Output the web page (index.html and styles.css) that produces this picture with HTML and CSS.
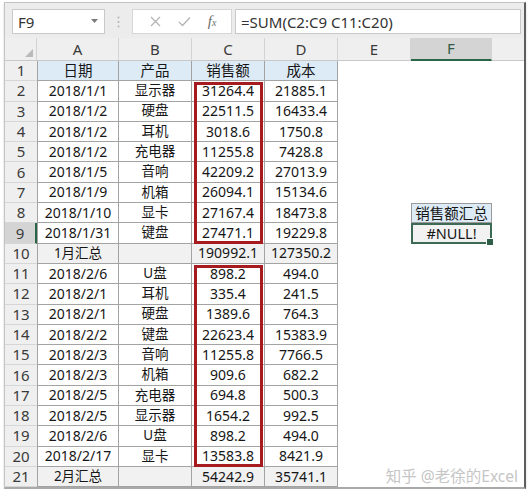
FILE: index.html
```html
<!DOCTYPE html>
<html lang="zh-CN">
<head>
<meta charset="utf-8">
<title>Sheet</title>
<link rel="stylesheet" href="styles.css">
</head>
<body>
<div class="win">
  <div class="fbar">
    <div class="namebox"><span>F9</span><svg class="dd" width="7" height="4" viewBox="0 0 7 4"><path d="M0 0H7L3.5 4Z" fill="#7b7b7b"/></svg></div>
    <div class="sep"><svg width="3" height="12" viewBox="0 0 3 12"><circle cx="1.5" cy="1.5" r="1" fill="#b3b3b3"/><circle cx="1.5" cy="6" r="1" fill="#b3b3b3"/><circle cx="1.5" cy="10.5" r="1" fill="#b3b3b3"/></svg></div>
    <div class="btns">
      <svg width="11" height="11" viewBox="0 0 11 11"><path d="M1 1L10 10M10 1L1 10" stroke="#b4b4b4" stroke-width="1.3" fill="none"/></svg>
      <svg width="13" height="11" viewBox="0 0 13 11"><path d="M1 6L4.5 9.5L12 1.5" stroke="#b4b4b4" stroke-width="1.3" fill="none"/></svg>
      <span class="fx">f<span class="fxx">x</span></span>
    </div>
    <div class="formula">=SUM(C2:C9 C11:C20)</div>
  </div>
  <div class="sheet">
    <div class="row g1">
      <div class="ch corner"><svg width="8" height="8" viewBox="0 0 8 8"><path d="M8 0V8H0Z" fill="#bababa"/></svg></div>
      <div class="ch">A</div><div class="ch">B</div><div class="ch">C</div><div class="ch">D</div><div class="ch">E</div><div class="ch selc">F</div><div class="ch fill"></div>
    </div>
    <div class="row g2"><div class="rh">1</div><div class="d hd">日期</div><div class="d hd">产品</div><div class="d hd">销售额</div><div class="d hd">成本</div></div>
    <div class="row g3"><div class="rh">2</div><div class="d">2018/1/1</div><div class="d cn">显示器</div><div class="d">31264.4</div><div class="d">21885.1</div></div>
    <div class="row g4"><div class="rh">3</div><div class="d">2018/1/2</div><div class="d cn">硬盘</div><div class="d">22511.5</div><div class="d">16433.4</div></div>
    <div class="row g5"><div class="rh">4</div><div class="d">2018/1/2</div><div class="d cn">耳机</div><div class="d">3018.6</div><div class="d">1750.8</div></div>
    <div class="row g6"><div class="rh">5</div><div class="d">2018/1/2</div><div class="d cn">充电器</div><div class="d">11255.8</div><div class="d">7428.8</div></div>
    <div class="row g7"><div class="rh">6</div><div class="d">2018/1/5</div><div class="d cn">音响</div><div class="d">42209.2</div><div class="d">27013.9</div></div>
    <div class="row g8"><div class="rh">7</div><div class="d">2018/1/9</div><div class="d cn">机箱</div><div class="d">26094.1</div><div class="d">15134.6</div></div>
    <div class="row g9"><div class="rh">8</div><div class="d">2018/1/10</div><div class="d cn">显卡</div><div class="d">27167.4</div><div class="d">18473.8</div></div>
    <div class="row g10"><div class="rh selr">9</div><div class="d">2018/1/31</div><div class="d cn">键盘</div><div class="d">27471.1</div><div class="d">19229.8</div></div>
    <div class="row g11"><div class="rh">10</div><div class="d sm cn">1月汇总</div><div class="d sm"></div><div class="d sm">190992.1</div><div class="d sm">127350.2</div></div>
    <div class="row g12"><div class="rh">11</div><div class="d">2018/2/6</div><div class="d cn">U盘</div><div class="d">898.2</div><div class="d">494.0</div></div>
    <div class="row g13"><div class="rh">12</div><div class="d">2018/2/1</div><div class="d cn">耳机</div><div class="d">335.4</div><div class="d">241.5</div></div>
    <div class="row g14"><div class="rh">13</div><div class="d">2018/2/1</div><div class="d cn">硬盘</div><div class="d">1389.6</div><div class="d">764.3</div></div>
    <div class="row g15"><div class="rh">14</div><div class="d">2018/2/2</div><div class="d cn">键盘</div><div class="d">22623.4</div><div class="d">15383.9</div></div>
    <div class="row g16"><div class="rh">15</div><div class="d">2018/2/3</div><div class="d cn">音响</div><div class="d">11255.8</div><div class="d">7766.5</div></div>
    <div class="row g17"><div class="rh">16</div><div class="d">2018/2/3</div><div class="d cn">机箱</div><div class="d">909.6</div><div class="d">682.2</div></div>
    <div class="row g18"><div class="rh">17</div><div class="d">2018/2/5</div><div class="d cn">充电器</div><div class="d">694.8</div><div class="d">500.3</div></div>
    <div class="row g19"><div class="rh">18</div><div class="d">2018/2/5</div><div class="d cn">显示器</div><div class="d">1654.2</div><div class="d">992.5</div></div>
    <div class="row g20"><div class="rh">19</div><div class="d">2018/2/6</div><div class="d cn">U盘</div><div class="d">898.2</div><div class="d">494.0</div></div>
    <div class="row g21"><div class="rh">20</div><div class="d">2018/2/17</div><div class="d cn">显卡</div><div class="d">13583.8</div><div class="d">8421.9</div></div>
    <div class="row g22"><div class="rh">21</div><div class="d sm cn">2月汇总</div><div class="d sm"></div><div class="d sm">54242.9</div><div class="d sm">35741.1</div></div>

    <div class="f8">销售额汇总</div>
    <div class="f9">#NULL!</div>
    <div class="rb rb1"></div>
    <div class="rb rb2"></div>
    <div class="wm">知乎 @老徐的Excel</div>
  </div>
</div>
</body>
</html>
```
FILE: styles.css
```css
* { box-sizing: border-box; }
body {
  margin: 0;
  background: #fff;
  font-family: "Noto Sans", "Noto Sans CJK SC", sans-serif;
  color: #161616;
}
.win {
  margin: 2px 0 0 4px;
  width: 522px;
  border-top: 1px solid #c4c4c4;
  border-left: 1px solid #c4c4c4;
  border-right: 2px solid #5e5e5e;
  border-bottom: 2px solid #a9a9a9;
  background: #ececec;
  box-shadow: 0 1px 2px rgba(0,0,0,0.18);
}
.fbar {
  display: flex;
  height: 35px;
  padding: 6px 3px 4px 7px;
}
.namebox {
  width: 93px;
  background: #fff;
  border: 1px solid #c9c9c9;
  display: flex;
  align-items: center;
  justify-content: space-between;
  padding: 0 6px 0 5px;
  font-size: 15px;
  color: #333;
}
.dd { margin-top: -2px; }
.sep {
  width: 27px;
  display: flex;
  align-items: center;
  justify-content: center;
}
.btns {
  width: 100px;
  background: #fff;
  border: 1px solid #d6d6d6;
  display: flex;
  align-items: center;
  justify-content: space-around;
  padding: 0 6px 0 8px;
}
.fx {
  font-family: "Liberation Serif", serif;
  font-style: italic;
  font-size: 15px;
  color: #6d6d6d;
}
.fxx { font-size: 10px; }
.formula {
  flex: 1;
  margin-left: 3px;
  background: #fff;
  border: 1px solid #c9c9c9;
  font-size: 15px;
  padding-left: 5px;
  display: flex;
  align-items: center;
  color: #333;
}
.sheet {
  display: grid;
  grid-template-columns: 32px 82px 73px 73px 73px 73px 81px 1fr;
  grid-template-rows: 23px repeat(21, 20.3px);
  background: #fff;
}
.row { display: contents; }
.row > * {
  display: flex;
  align-items: center;
  justify-content: center;
  white-space: nowrap;
  font-size: 14px;
  line-height: 1;
}
.row > :nth-child(1) { grid-column: 1; }
.row > :nth-child(2) { grid-column: 2; }
.row > :nth-child(3) { grid-column: 3; }
.row > :nth-child(4) { grid-column: 4; }
.row > :nth-child(5) { grid-column: 5; }
.row > :nth-child(6) { grid-column: 6; }
.row > :nth-child(7) { grid-column: 7; }
.row > :nth-child(8) { grid-column: 8; }
.g1 > * { grid-row: 1; }
.g2 > * { grid-row: 2; }
.g3 > * { grid-row: 3; }
.g4 > * { grid-row: 4; }
.g5 > * { grid-row: 5; }
.g6 > * { grid-row: 6; }
.g7 > * { grid-row: 7; }
.g8 > * { grid-row: 8; }
.g9 > * { grid-row: 9; }
.g10 > * { grid-row: 10; }
.g11 > * { grid-row: 11; }
.g12 > * { grid-row: 12; }
.g13 > * { grid-row: 13; }
.g14 > * { grid-row: 14; }
.g15 > * { grid-row: 15; }
.g16 > * { grid-row: 16; }
.g17 > * { grid-row: 17; }
.g18 > * { grid-row: 18; }
.g19 > * { grid-row: 19; }
.g20 > * { grid-row: 20; }
.g21 > * { grid-row: 21; }
.g22 > * { grid-row: 22; }

.row > .ch {
  background: #efefef;
  border-right: 1px solid #d3d3d3;
  border-bottom: 1px solid #c8c8c8;
  color: #3a3a3a;
  font-size: 15px;
}
.row > .corner {
  justify-content: flex-end;
  align-items: flex-end;
  padding: 0 3px 3px 0;
}
.row > .selc {
  background: #d4d4d4;
  border-bottom: 2px solid #2b6547;
  color: #2f5a45;
}
.row > .fill { border-right: none; }
.row > .rh {
  background: #efefef;
  border-bottom: 1px solid #d6d6d6;
  color: #3a3a3a;
  font-size: 15px;
}
.row > .selr {
  background: #d4d4d4;
  border-right: 2px solid #2b6547;
}
.d {
  border-right: 1px solid #a3a3a3;
  border-bottom: 1px solid #a3a3a3;
}
.row > .d:nth-child(2) { border-left: 1px solid #a3a3a3; }
.row > .hd { background: #ddebf7; font-size: 14.5px; }
.row > .cn { font-size: 13.5px; }
.row > .sm { background: #f1f1f1; }

.f8 {
  grid-column: 7;
  grid-row: 9;
  background: #ddebf7;
  border: 1px solid #9a9a9a;
  display: flex;
  align-items: center;
  justify-content: center;
  font-size: 14.5px;
  line-height: 1;
}
.f9 {
  grid-column: 7;
  grid-row: 10;
  position: relative;
  background: #f2f2f2;
  border: 2px solid #3d6a54;
  display: flex;
  align-items: center;
  justify-content: center;
  font-size: 14.5px;
  line-height: 1;
}
.f9::after {
  content: "";
  position: absolute;
  right: -4px;
  bottom: -4px;
  width: 6px;
  height: 6px;
  background: #2f5f48;
  border: 1px solid #fff;
}
.rb {
  grid-column: 4;
  border: 3px solid #a51b20;
  margin: 1px 2px 0 2px;
  z-index: 1;
}
.rb1 { grid-row: 3 / 11; }
.rb2 { grid-row: 12 / 22; }
.wm {
  grid-column: 6 / 9;
  grid-row: 22;
  justify-self: end;
  align-self: center;
  margin-right: 6px;
  color: #c6c6c6;
  font-size: 15.5px;
  line-height: 1;
  white-space: nowrap;
  z-index: 1;
}
```
